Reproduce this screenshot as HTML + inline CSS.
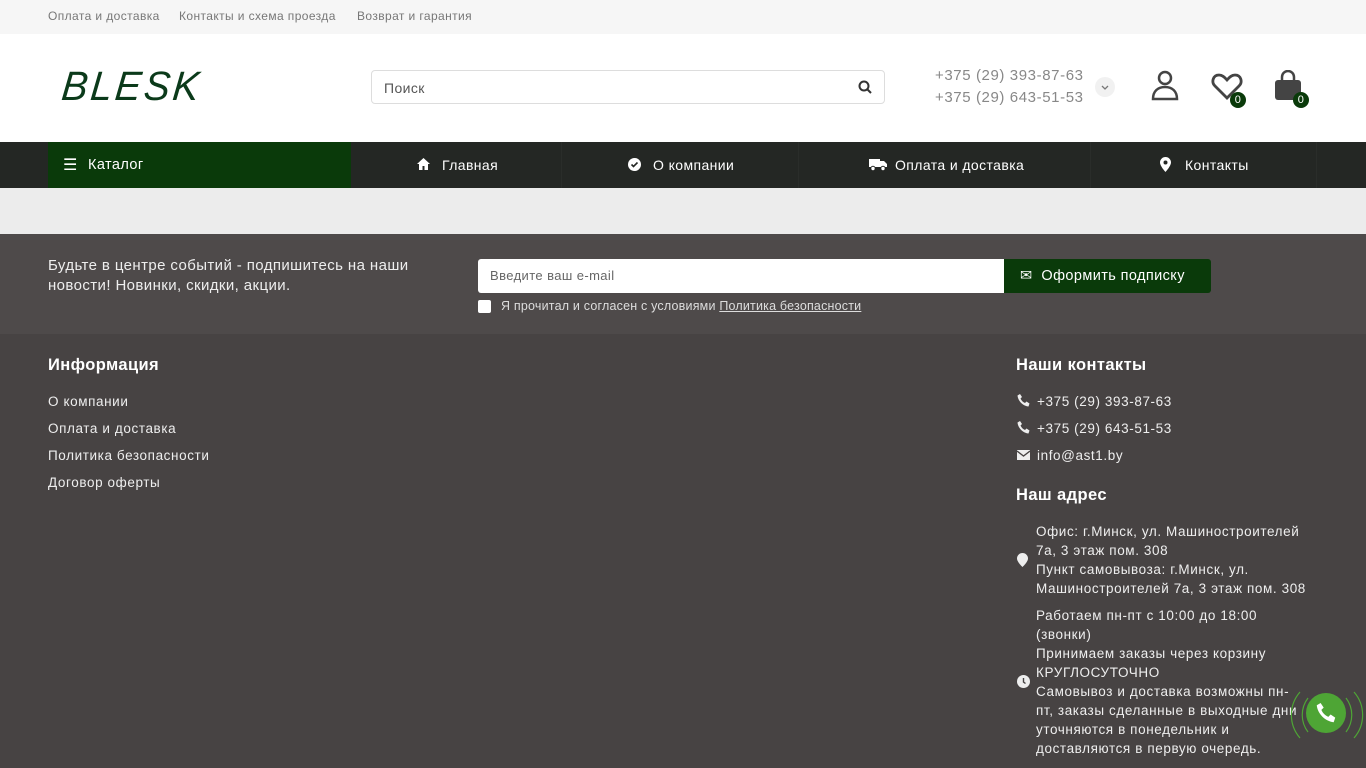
<!DOCTYPE html>
<html><head><meta charset="utf-8"><style>
*{box-sizing:border-box;margin:0;padding:0}
body{width:1366px;height:768px;overflow:hidden;font-family:"Liberation Sans","DejaVu Sans",sans-serif;background:#474343;position:relative;letter-spacing:0.4px}
.top{height:34px;background:#f6f6f6;font-size:12px;color:#777}
.top span{position:absolute;top:9px}
.hdr{position:absolute;top:34px;left:0;width:1366px;height:108px;background:#fff}
.logo{position:absolute;left:62px;top:30px;font-family:"Liberation Sans",sans-serif;font-style:italic;font-size:41px;color:#0b3a1a;letter-spacing:3px;transform:skewX(-6deg) scaleX(0.95);transform-origin:left;font-weight:normal;line-height:44px}
.search{position:absolute;left:371px;top:36px;width:514px;height:34px;border:1px solid #ddd;border-radius:4px;font-size:14px;color:#555;padding:9px 12px}
.ph{position:absolute;left:935px;font-size:15px;color:#888;letter-spacing:0.6px}
.nav{position:absolute;top:142px;left:0;width:1366px;height:46px;background:#242724;color:#fff;font-size:14px}
.nav span{position:absolute;top:15px}
.cat{position:absolute;left:48px;top:0;width:303px;height:46px;background:#0a3a0a}
.sep{position:absolute;top:0;width:1px;height:46px;background:#2a2d2a}
.gray{position:absolute;top:188px;left:0;width:1366px;height:46px;background:#ececec}
.sub{position:absolute;top:234px;left:0;width:1366px;height:100px;background:#4e4a4a;color:#eee}
.f{position:absolute;color:#eee;font-size:13.5px;letter-spacing:0.6px}
.h{position:absolute;color:#fff;font-weight:bold;font-size:16.5px}
</style></head><body>
<div class="top"><span style="left:48px">Оплата и доставка</span><span style="left:179px">Контакты и схема проезда</span><span style="left:357px">Возврат и гарантия</span></div>
<div class="hdr">
<div class="logo">BLESK</div>
<div class="search">Поиск<svg style="position:absolute;right:12px;top:9px" width="14" height="14" viewBox="0 0 14 14"><circle cx="6" cy="6" r="4.5" fill="none" stroke="#333" stroke-width="2"/><path d="M9 9l4 4" stroke="#333" stroke-width="2"/></svg></div>
<div class="ph" style="top:33px">+375 (29) 393-87-63</div>
<div class="ph" style="top:55px">+375 (29) 643-51-53</div>
<div style="position:absolute;left:1095px;top:43px;width:20px;height:20px;border-radius:50%;background:#f1f1f1"><svg width="20" height="20"><path d="M7 9l3 3 3-3" stroke="#777" fill="none" stroke-width="1.3"/></svg></div>
<svg style="position:absolute;left:1150px;top:35px" width="30" height="32" viewBox="0 0 30 32"><circle cx="15" cy="9" r="6" fill="none" stroke="#444" stroke-width="2.5"/><path d="M3 30c0-8 5-12 12-12s12 4 12 12z" fill="none" stroke="#444" stroke-width="2.5"/></svg>
<svg style="position:absolute;left:1211px;top:38px" width="32" height="28" viewBox="0 0 32 28"><path d="M16 26L4 14C0 10 2 3 8 3c4 0 6 3 8 5 2-2 4-5 8-5 6 0 8 7 4 11z" fill="none" stroke="#444" stroke-width="2.8"/></svg>
<div style="position:absolute;left:1230px;top:58px;width:16px;height:16px;border-radius:50%;background:#0a3a0a;color:#fff;font-size:11px;text-align:center;line-height:16px">0</div>
<svg style="position:absolute;left:1274px;top:36px" width="28" height="30" viewBox="0 0 28 30"><path d="M8 10V7a6 6 0 0112 0v3" fill="none" stroke="#444" stroke-width="2.5"/><rect x="1" y="10" width="26" height="20" rx="3" fill="#444"/></svg>
<div style="position:absolute;left:1293px;top:58px;width:16px;height:16px;border-radius:50%;background:#0a3a0a;color:#fff;font-size:11px;text-align:center;line-height:16px">0</div>
</div>
<div class="nav">
<div class="cat"></div>
<span style="left:63px;top:13px;font-size:16px">☰</span><span style="left:88px;font-size:14.5px;top:15px">Каталог</span>
<div class="sep" style="left:561px"></div><div class="sep" style="left:798px"></div><div class="sep" style="left:1090px"></div><div class="sep" style="left:1316px"></div>
<svg style="position:absolute;left:416px;top:15px" width="15" height="14"><path d="M7.5 1L1 7h2v6h3.5V9h2v4H12V7h2z" fill="#fff"/></svg><span style="left:442px">Главная</span>
<svg style="position:absolute;left:628px;top:16px" width="13" height="13"><circle cx="6.5" cy="6.5" r="6.5" fill="#fff"/><path d="M3.5 6.5l2 2 4-4" stroke="#242724" stroke-width="1.6" fill="none"/></svg><span style="left:653px">О компании</span>
<svg style="position:absolute;left:869px;top:16px" width="18" height="13"><rect x="0" y="1" width="11" height="8" fill="#fff"/><path d="M11 3h4l3 3v3h-7z" fill="#fff"/><circle cx="4" cy="10.5" r="2.2" fill="#fff" stroke="#242724"/><circle cx="14" cy="10.5" r="2.2" fill="#fff" stroke="#242724"/></svg><span style="left:895px">Оплата и доставка</span>
<svg style="position:absolute;left:1160px;top:15px" width="11" height="15"><path d="M5.5 0A5.5 5.5 0 000 5.5C0 9 5.5 15 5.5 15S11 9 11 5.5A5.5 5.5 0 005.5 0z" fill="#fff"/><circle cx="5.5" cy="5.5" r="2" fill="#242724"/></svg><span style="left:1185px">Контакты</span>
</div>
<div class="gray"></div>
<div class="sub">
<div style="position:absolute;left:48px;top:22px;font-size:15px;line-height:20px;color:#eee">Будьте в центре событий - подпишитесь на наши<br>новости! Новинки, скидки, акции.</div>
<div style="position:absolute;left:478px;top:25px;width:526px;height:34px;background:#fff;border-radius:3px 0 0 3px;font-size:13px;color:#666;padding:9px 12px">Введите ваш e-mail</div>
<div style="position:absolute;left:1004px;top:25px;width:207px;height:34px;background:#0a3a0a;border-radius:0 3px 3px 0;color:#fff;font-size:14.5px;padding:9px 0 0 16px">✉&nbsp; Оформить подписку</div>
<div style="position:absolute;left:478px;top:66px;width:13px;height:13px;background:#fff;border-radius:2px"></div>
<div style="position:absolute;left:501px;top:65px;font-size:12.5px;color:#ddd;letter-spacing:0.2px">Я прочитал и согласен с условиями <u>Политика безопасности</u></div>
</div>
<div class="h" style="left:48px;top:356px">Информация</div>
<div class="f" style="left:48px;top:394px">О компании</div>
<div class="f" style="left:48px;top:421px">Оплата и доставка</div>
<div class="f" style="left:48px;top:448px">Политика безопасности</div>
<div class="f" style="left:48px;top:475px">Договор оферты</div>
<div class="h" style="left:1016px;top:356px">Наши контакты</div>
<svg style="position:absolute;left:1017px;top:394px" width="13" height="13" viewBox="0 0 13 13"><path d="M3 0l2 3-1.5 1.5c.8 2 2.5 3.7 4.5 4.5L9.5 7.5l3 2-1 3C6 12 1 7 .5 1.5z" fill="#eee"/></svg><div class="f" style="left:1037px;top:394px">+375 (29) 393-87-63</div>
<svg style="position:absolute;left:1017px;top:421px" width="13" height="13" viewBox="0 0 13 13"><path d="M3 0l2 3-1.5 1.5c.8 2 2.5 3.7 4.5 4.5L9.5 7.5l3 2-1 3C6 12 1 7 .5 1.5z" fill="#eee"/></svg><div class="f" style="left:1037px;top:421px">+375 (29) 643-51-53</div>
<svg style="position:absolute;left:1017px;top:450px" width="13" height="10"><rect width="13" height="10" fill="#eee"/><path d="M0 1l6.5 5L13 1" stroke="#474343" fill="none" stroke-width="1.3"/></svg><div class="f" style="left:1037px;top:448px">info@ast1.by</div>
<div class="h" style="left:1016px;top:486px">Наш адрес</div>
<svg style="position:absolute;left:1017px;top:553px" width="11" height="14"><path d="M5.5 0A5.5 5.5 0 000 5.5C0 9 5.5 14 5.5 14S11 9 11 5.5A5.5 5.5 0 005.5 0z" fill="#eee"/></svg>
<div class="f" style="left:1036px;top:522px;line-height:19px">Офис: г.Минск, ул. Машиностроителей<br>7а, 3 этаж пом. 308<br>Пункт самовывоза: г.Минск, ул.<br>Машиностроителей 7а, 3 этаж пом. 308</div>
<svg style="position:absolute;left:1017px;top:675px" width="13" height="13"><circle cx="6.5" cy="6.5" r="6.5" fill="#eee"/><path d="M6.5 3v4l2 1.5" stroke="#474343" stroke-width="1.4" fill="none"/></svg>
<div class="f" style="left:1036px;top:606px;line-height:19px">Работаем пн-пт с 10:00 до 18:00<br>(звонки)<br>Принимаем заказы через корзину<br>КРУГЛОСУТОЧНО<br>Самовывоз и доставка возможны пн-<br>пт, заказы сделанные в выходные дни<br>уточняются в понедельник и<br>доставляются в первую очередь.</div>
<svg style="position:absolute;left:1288px;top:684px" width="78" height="60"><path d="M12 8a35 35 0 000 46M66 8a35 35 0 010 46M20 14a28 28 0 000 34M58 14a28 28 0 010 34" stroke="#4ea535" fill="none" stroke-width="1.2"/></svg>
<div style="position:absolute;left:1306px;top:693px;width:40px;height:40px;border-radius:50%;background:#4ea535"><svg style="position:absolute;left:10px;top:10px" width="20" height="20" viewBox="0 0 13 13"><path d="M3 0l2 3-1.5 1.5c.8 2 2.5 3.7 4.5 4.5L9.5 7.5l3 2-1 3C6 12 1 7 .5 1.5z" fill="#fff"/></svg></div>
</body></html>
